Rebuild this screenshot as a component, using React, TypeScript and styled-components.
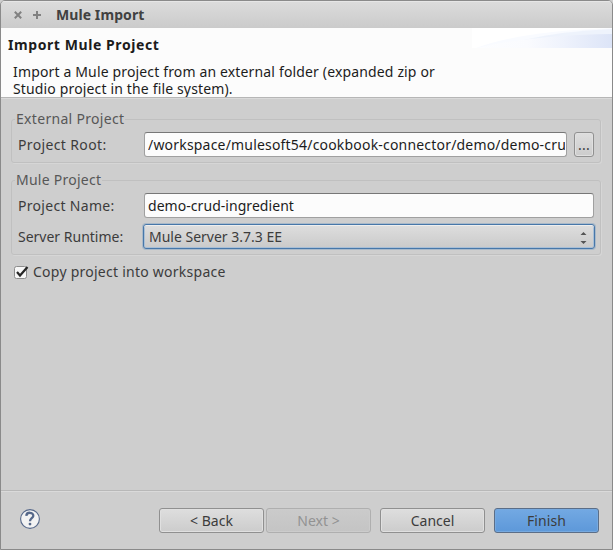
import React from "react";
import styled, { createGlobalStyle } from "styled-components";

const Global = createGlobalStyle`
  * { box-sizing: border-box; }
  html, body { margin: 0; padding: 0; background: #cecece; }
  body { font: 14px/18px "Noto Sans", "Open Sans", sans-serif; color: #3c3c3c; }
  input, button { font: inherit; color: inherit; }
`;

const Window = styled.div`
  width: 613px;
  height: 550px;
  display: flex;
  flex-direction: column;
  overflow: hidden;
  background: #cecece;
  border: 1px solid #8a8a8a;
  border-radius: 5px 5px 0 0;
`;

const TitleBar = styled.header`
  height: 27px;
  flex: none;
  display: flex;
  align-items: center;
  padding: 1px 0 0 12px;
  background: linear-gradient(#dcdcdc, #cbcbcb);
  box-shadow: inset 0 1px #e6e6e6;
`;

const WindowIcon = styled.svg`
  width: 10px;
  height: 10px;
  margin-right: 9px;
  fill: none;
  stroke: #818181;
  stroke-width: 2;
`;

const Text = styled.span<{ $spacing?: number }>`
  white-space: pre;
  letter-spacing: ${(p) => p.$spacing ?? 0}px;
`;

const WindowTitle = styled(Text)`
  margin-left: 5px;
  font-weight: 700;
  color: #414141;
`;

const Banner = styled.section`
  height: 69px;
  flex: none;
  display: flex;
  justify-content: space-between;
  background: #fcfcfc;
`;

const BannerText = styled.div`
  display: flex;
  flex-direction: column;
  padding: 8px 0 0 7px;
  color: #1c1c1c;
`;

const Heading = styled(Text)`
  font-weight: 700;
  margin-bottom: 9px;
`;

const Description = styled(Text)`
  padding-left: 5px;
  line-height: 17px;
`;

const BannerArt = styled.svg`
  width: 140px;
  height: 20px;
`;

const Content = styled.main`
  height: 393px;
  flex: none;
  border-top: 1px solid #b6b6b6;
  box-shadow: inset 0 1px #dadada;
  padding: 12px 11px 0 10px;
`;

const Group = styled.fieldset`
  margin: 0 0 8px;
  padding: 4px 6px 5px;
  min-width: 0;
  border: 1px solid #c0c0c0;
  border-radius: 3px;
  box-shadow: 1px 1px #d6d6d6;
`;

const Legend = styled.legend`
  height: 18px;
  margin-left: -3px;
  padding: 0 1px;
  color: #575757;
`;

const Row = styled.div`
  display: flex;
  align-items: center;
  height: 25px;
  & + & { margin-top: 6px; }
`;

const Label = styled.label`
  width: 126px;
  flex: none;
`;

const Field = styled.div`
  flex: 1;
  min-width: 0;
  height: 25px;
  padding: 0 1px 0 3px;
  border: 1px solid #a0a0a0;
  border-top-color: #777;
  border-radius: 3px;
  background: #fcfcfc;
  color: #1c1c1c;
`;

const FieldClip = styled.div`
  overflow: hidden;
  line-height: 23px;
  height: 23px;
`;

const PushButton = styled.button<{ $width: number; $kind?: "disabled" | "primary" }>`
  width: ${(p) => p.$width}px;
  height: 25px;
  padding: 0;
  flex: none;
  line-height: 22px;
  border: 1px solid ${(p) => (p.$kind === "disabled" ? "#afafaf" : p.$kind === "primary" ? "#5b6e88" : "#909090")};
  border-radius: 3px;
  color: ${(p) => (p.$kind === "disabled" ? "#929292" : "#3c3c3c")};
  background: ${(p) =>
    p.$kind === "disabled"
      ? "linear-gradient(#cbcbcb, #c4c4c4)"
      : p.$kind === "primary"
        ? "linear-gradient(#73a9e3, #5d98d9)"
        : "linear-gradient(#dedede, #cccccc)"};
  box-shadow: inset 0 0 0 1px
    ${(p) => (p.$kind === "disabled" ? "#cccccc" : p.$kind === "primary" ? "#76a9df" : "#e0e0e0")};
`;

const BrowseButton = styled(PushButton)`
  margin-left: 7px;
`;

const Select = styled.div`
  flex: 1;
  height: 25px;
  margin: 0 -1px;
  display: flex;
  align-items: center;
  justify-content: space-between;
  padding: 0 7px 0 5px;
  border: 1px solid #4777a9;
  border-radius: 3px;
  background: linear-gradient(#dedede, #cacaca);
  box-shadow: inset 0 1px #eee, inset 0 0 0 1px #a9bfd6, 0 0 0 1px rgba(100, 146, 192, 0.35);
`;

const Arrows = styled.svg`
  width: 7px;
  height: 14px;
  margin-top: 3px;
  fill: #555;
`;

const CheckRow = styled.div`
  display: flex;
  align-items: center;
  height: 18px;
  padding-left: 3px;
`;

const CheckIcon = styled.svg`
  width: 15px;
  height: 15px;
  margin-right: 4px;
`;

const Footer = styled.footer`
  flex: 1;
  display: flex;
  align-items: flex-start;
  border-top: 1px solid #b8b8b8;
  box-shadow: inset 0 1px #dadada;
  padding: 17px 13px 0 18px;
`;

const HelpIcon = styled.svg`
  width: 22px;
  height: 22px;
  margin-right: auto;
`;

const Buttons = styled.div`
  display: flex;
  gap: 9px;
`;

const ButtonPair = styled.div`
  display: flex;
  gap: 2px;
`;

export default function App() {
  return (
    <>
      <Global />
      <Window>
        <TitleBar>
          <WindowIcon viewBox="0 0 10 10"><path d="M1.8 1.8 8.2 8.2M8.2 1.8 1.8 8.2" /></WindowIcon>
          <WindowIcon viewBox="0 0 10 10"><path d="M1 5H9M5 1V9" /></WindowIcon>
          <WindowTitle $spacing={0.08}>Mule Import</WindowTitle>
        </TitleBar>
        <Banner>
          <BannerText>
            <Heading $spacing={0.58}>Import Mule Project</Heading>
            <Description $spacing={0.15}>Import a Mule project from an external folder (expanded zip or</Description>
            <Description $spacing={0.15}>Studio project in the file system).</Description>
          </BannerText>
          <BannerArt viewBox="0 0 140 20">
            <defs>
              <linearGradient id="sweep">
                <stop offset="0" stopColor="#fcfdff" />
                <stop offset="0.38" stopColor="#fafbfe" />
                <stop offset="0.65" stopColor="#eef2fc" />
                <stop offset="1" stopColor="#dce4f7" />
              </linearGradient>
            </defs>
            <path d="M0 0H140V20H0Z" fill="#fff" />
            <path d="M4 20Q50 3 140 0V20Z" fill="#f9fbff" />
            <path d="M52 12Q90 3 140 1V20H52Z" fill="#e9effb" opacity=".7" />
            <path d="M4 20Q60 7 140 6V20Z" fill="url(#sweep)" />
          </BannerArt>
        </Banner>
        <Content>
          <Group>
            <Legend><Text $spacing={0.31}>External Project</Text></Legend>
            <Row>
              <Label><Text $spacing={0.36}>Project Root:</Text></Label>
              <Field>
                <FieldClip>
                  <Text $spacing={0.19}>/workspace/mulesoft54/cookbook-connector/demo/demo-crud-ingredient</Text>
                </FieldClip>
              </Field>
              <BrowseButton $width={20}><Text $spacing={0.3}>...</Text></BrowseButton>
            </Row>
          </Group>
          <Group>
            <Legend><Text $spacing={0.25}>Mule Project</Text></Legend>
            <Row>
              <Label><Text $spacing={0.31}>Project Name:</Text></Label>
              <Field>
                <FieldClip><Text $spacing={0.05}>demo-crud-ingredient</Text></FieldClip>
              </Field>
            </Row>
            <Row>
              <Label><Text>Server Runtime:</Text></Label>
              <Select>
                <Text>Mule Server 3.7.3 EE</Text>
                <Arrows viewBox="0 0 7 14"><path d="M.5 4 3.5 1 6.5 4ZM.5 10 3.5 13 6.5 10Z" /></Arrows>
              </Select>
            </Row>
          </Group>
          <CheckRow>
            <CheckIcon viewBox="0 0 15 15">
              <rect x=".5" y="1.5" width="12" height="12" rx="2" fill="#f7f7f7" stroke="#8d8d8d" />
              <path d="M3 7 6 10.5 13.5 2" fill="none" stroke="#262626" strokeWidth="2.2" />
            </CheckIcon>
            <Text $spacing={0.25}>Copy project into workspace</Text>
          </CheckRow>
        </Content>
        <Footer>
          <HelpIcon viewBox="0 0 22 22">
            <circle cx="11" cy="11" r="9.4" fill="#f3f3f3" stroke="#56688a" strokeWidth="1.1" />
            <path d="M7.3 7.9C7.4 3.6 14.6 3.9 14.3 7.8 14.1 10.2 11 10.3 11 13.2" fill="none" stroke="#56688a" strokeWidth="2.3" />
            <circle cx="11" cy="16.1" r="1.4" fill="#56688a" />
          </HelpIcon>
          <Buttons>
            <ButtonPair>
              <PushButton $width={105}><Text>{"< Back"}</Text></PushButton>
              <PushButton $width={105} $kind="disabled"><Text>{"Next >"}</Text></PushButton>
            </ButtonPair>
            <PushButton $width={105}><Text>Cancel</Text></PushButton>
            <PushButton $width={105} $kind="primary"><Text $spacing={0.1}>Finish</Text></PushButton>
          </Buttons>
        </Footer>
      </Window>
    </>
  );
}
